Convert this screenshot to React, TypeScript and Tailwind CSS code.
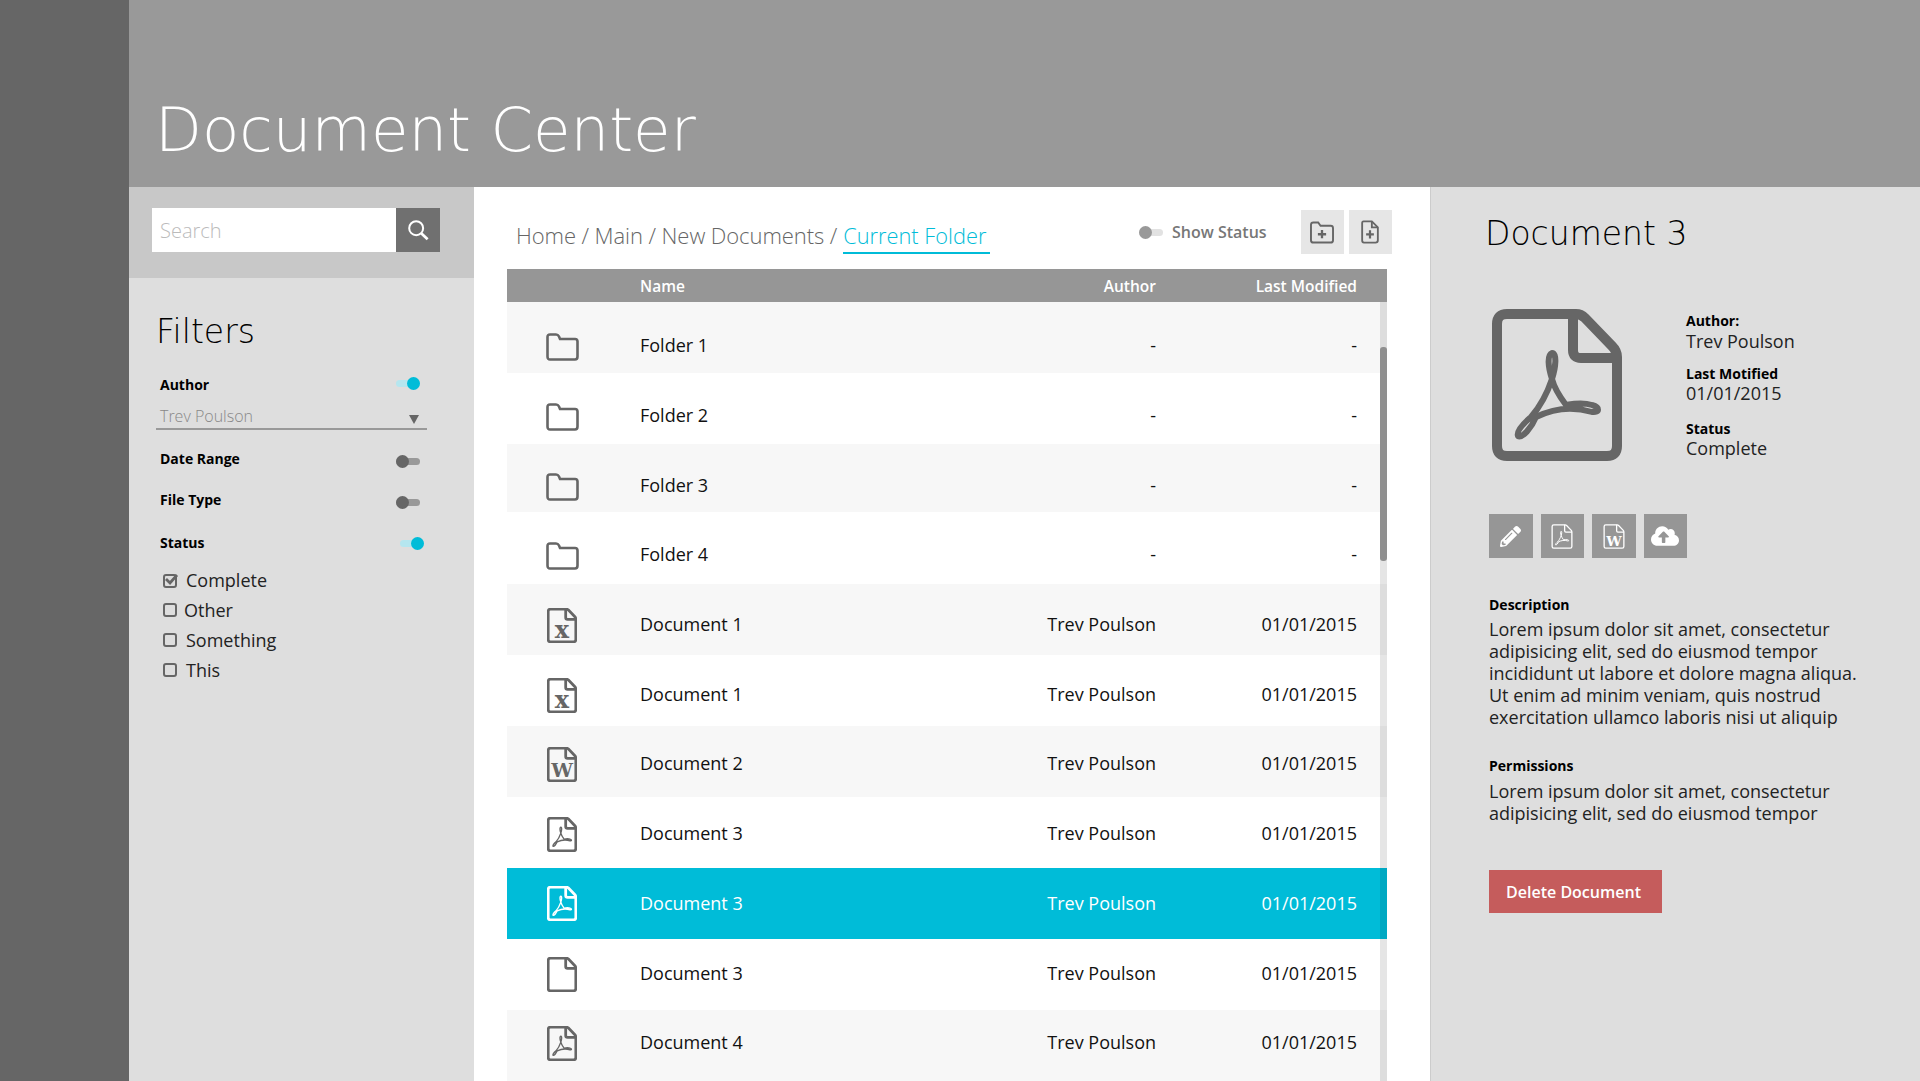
import { FaCloudUploadAlt, FaPencilAlt } from "react-icons/fa"
import type { ReactNode } from "react"

type FileKind = "folder" | "xls" | "doc" | "pdf" | "blank"

const rows: { kind: FileKind; name: string; author: string; date: string; shift: number }[] = [
  { kind: "folder", name: "Folder 1", author: "-", date: "-", shift: 7.5 },
  { kind: "folder", name: "Folder 2", author: "-", date: "-", shift: 6.5 },
  { kind: "folder", name: "Folder 3", author: "-", date: "-", shift: 7 },
  { kind: "folder", name: "Folder 4", author: "-", date: "-", shift: 6.5 },
  { kind: "xls", name: "Document 1", author: "Trev Poulson", date: "01/01/2015", shift: 4.5 },
  { kind: "xls", name: "Document 1", author: "Trev Poulson", date: "01/01/2015", shift: 3.5 },
  { kind: "doc", name: "Document 2", author: "Trev Poulson", date: "01/01/2015", shift: 1.5 },
  { kind: "pdf", name: "Document 3", author: "Trev Poulson", date: "01/01/2015", shift: 0.5 },
  { kind: "pdf", name: "Document 3", author: "Trev Poulson", date: "01/01/2015", shift: 0 },
  { kind: "blank", name: "Document 3", author: "Trev Poulson", date: "01/01/2015", shift: -1.5 },
  { kind: "pdf", name: "Document 4", author: "Trev Poulson", date: "01/01/2015", shift: -3.5 },
]

const lorem =
  "Lorem ipsum dolor sit amet, consectetur adipisicing elit, sed do eiusmod tempor"

function FileIcon({
  kind,
  className,
  weight = 10,
}: {
  kind: Exclude<FileKind, "folder">
  className: string
  weight?: number
}) {
  return (
    <svg viewBox="0 0 130 152" fill="none" stroke="currentColor" className={className}>
      <path
        strokeWidth={weight}
        d="M15 5H84Q89 5 93 9L120 37Q125 42 125 48V137Q125 147 115 147H15Q5 147 5 137V15Q5 5 15 5Z"
      />
      <path strokeWidth={weight} d="M81 5V41Q81 49 89 49H125" />
      {kind === "pdf" && (
        <path
          strokeWidth="6"
          strokeLinejoin="round"
          d="M60 70C56 58 55 46 60 44C65 44 64 58 60 70C54 88 46 100 39 108C32 114 24 122 26 127C30 130 40 118 44 108C60 100 80 97 100 103C108 104 108 98 100 96C90 93 80 95 74 96C68 88 62 78 60 70Z"
        />
      )}
      {kind === "xls" && (
        <text
          x="65"
          y="130"
          textAnchor="middle"
          fontFamily="'DejaVu Serif', serif"
          fontWeight="700"
          fontSize="104"
          fill="currentColor"
          stroke="none"
        >
          x
        </text>
      )}
      {kind === "doc" && (
        <text
          x="65"
          y="132"
          textAnchor="middle"
          fontFamily="'DejaVu Serif', serif"
          fontWeight="700"
          fontSize="84"
          fill="currentColor"
          stroke="none"
        >
          W
        </text>
      )}
    </svg>
  )
}

function FolderIcon() {
  return (
    <svg viewBox="0 0 33 28" fill="none" stroke="currentColor" strokeWidth="2.6" className="h-[28px] w-[33px]">
      <path d="M1.5 4Q1.5 1.5 4 1.5H10Q12 1.5 13 3.5L14 6H29Q31.5 6 31.5 8.5V23.5Q31.5 26.5 29 26.5H4Q1.5 26.5 1.5 23.5Z" />
    </svg>
  )
}

function Toggle({
  on,
  muted = false,
  className = "",
}: {
  on: boolean
  muted?: boolean
  className?: string
}) {
  return (
    <span className={`relative block h-[13px] w-6 shrink-0 ${className}`}>
      <span
        className={`absolute inset-x-0 top-[3px] h-[7px] rounded-full ${
          on ? "bg-[#b5e6ef]" : muted ? "bg-[#e2e2e2]" : "bg-[#999999]"
        }`}
      />
      <span
        className={`absolute top-0 size-[13px] rounded-full ${
          on ? "right-0 bg-[#00bcd8]" : muted ? "left-0 bg-[#999999]" : "left-0 bg-[#666666]"
        }`}
      />
    </span>
  )
}

function FilterHeading({
  label,
  on,
  className = "",
  toggleClassName = "",
}: {
  label: string
  on: boolean
  className?: string
  toggleClassName?: string
}) {
  return (
    <div className={`flex h-[21px] items-center justify-between ${className}`}>
      <span className="text-[14px] font-bold text-black">{label}</span>
      <Toggle on={on} className={toggleClassName} />
    </div>
  )
}

function CheckRow({
  label,
  checked = false,
  className = "h-[30px] gap-[9px]",
}: {
  label: string
  checked?: boolean
  className?: string
}) {
  return (
    <div className={`flex items-center pl-[3px] text-[18px] text-[#222222] ${className}`}>
      <span className="relative size-[14px] rounded-[3px] border-2 border-[#666666]">
        {checked && (
          <svg
            viewBox="0 0 16 16"
            className="absolute -top-[4px] -right-[4px] size-[16px]"
            fill="none"
            stroke="#666666"
            strokeWidth="2.8"
          >
            <path d="M3 7L7 11L14 3" />
          </svg>
        )}
      </span>
      {label}
    </div>
  )
}

function SquareButton({ children, className }: { children: ReactNode; className: string }) {
  return <button className={`flex items-center justify-center ${className}`}>{children}</button>
}

function Row({ row, index }: { row: (typeof rows)[number]; index: number }) {
  const selected = index === 8
  const striped = index % 2 === 0
  const height = index === 2 ? "h-[68px]" : index === 3 ? "h-[72px]" : "h-[71px]"
  return (
    <div
      style={{
        paddingTop: Math.max(0, row.shift * 2),
        paddingBottom: Math.max(0, -row.shift * 2),
      }}
      className={`flex items-center text-[18px] ${height} ${
        selected ? "bg-[#00bcd8] text-white" : striped ? "bg-[#f7f7f7] text-[#111111]" : "bg-white text-[#111111]"
      }`}
    >
      <div className={`flex w-[133px] justify-center pr-[23px] ${selected ? "text-white" : "mt-[3px] text-[#666666]"}`}>
        {row.kind === "folder" ? (
          <FolderIcon />
        ) : (
          <FileIcon kind={row.kind} weight={12} className="h-[35px] w-[30px]" />
        )}
      </div>
      <div className="flex-1">{row.name}</div>
      <div className="w-[200px] text-right">{row.author}</div>
      <div className="w-[201px] text-right">{row.date}</div>
      <div className="w-[30px]" />
    </div>
  )
}

export default function App() {
  return (
    <div className="flex h-screen overflow-hidden font-['Open_Sans',sans-serif]">
      <div className="w-[129px] shrink-0 bg-[#666666]" />
      <div className="flex min-w-0 flex-1 flex-col">
        <header className="h-[187px] shrink-0 bg-[#999999] pt-[86px] pl-[26px]">
          <h1 className="font-['DejaVu_Sans',sans-serif] text-[61px] leading-[88px] font-extralight text-white">
            Document Center
          </h1>
        </header>
        <div className="flex min-h-0 flex-1">
          <aside className="w-[345px] shrink-0 bg-[#dedede]">
            <div className="flex h-[91px] bg-[#c8c8c8] pt-[21px] pl-[23px]">
              <div className="flex h-[44px] w-[244px] items-center bg-white pt-[2px] pl-[8px] text-[20px] font-light text-[#bbbbbb]">
                Search
              </div>
              <button className="flex size-[44px] items-center justify-center bg-[#707070] text-white">
                <svg viewBox="0 0 24 24" fill="none" stroke="currentColor" className="size-[22px]">
                  <circle cx="10" cy="10" r="7.6" strokeWidth="2.2" />
                  <path strokeWidth="3" d="M15.5 15.5L22.5 22" />
                </svg>
              </button>
            </div>
            <div className="pt-[32px] pl-[31px]">
              <h2 className="-ml-[4px] font-['DejaVu_Sans',sans-serif] text-[33px] leading-[44px] font-extralight text-black">
                Filters
              </h2>
              <FilterHeading label="Author" on className="mt-[20px] w-[260px]" toggleClassName="mb-[2px]" />
              <div className="mt-[8px] -ml-[4px] flex h-[27px] w-[271px] items-center justify-between border-b-2 border-[#999999] pr-[8px] pl-[4px] text-[16px] font-light text-[#888888]">
                Trev Poulson
                <span className="mt-[8px] border-x-[5px] border-t-[9px] border-x-transparent border-t-[#666666]" />
              </div>
              <FilterHeading label="Date Range" on={false} className="mt-[18px] w-[260px]" toggleClassName="mt-[6px]" />
              <FilterHeading label="File Type" on={false} className="mt-[20px] w-[260px]" toggleClassName="mt-[6px]" />
              <FilterHeading label="Status" on className="mt-[22px] w-[264px]" toggleClassName="mt-[2px]" />
              <div className="mt-[13px]">
                <CheckRow label="Complete" checked className="h-[29px] gap-[9px]" />
                <CheckRow label="Other" className="h-[30px] gap-[7px]" />
                <CheckRow label="Something" />
                <CheckRow label="This" />
              </div>
            </div>
          </aside>

          <main className="w-[956px] shrink-0 bg-white">
            <div className="flex h-[82px] items-start pl-[42px]">
              <div className="mt-[32px] flex w-[504px] items-baseline text-[22px] leading-[32px] font-light text-[#666666]">
                <span className="tracking-[-0.08px]">Home / Main / New Documents /</span>
                <span className="ml-[6px] border-b-2 border-[#00bcd8] pr-[4px] text-[21.8px] text-[#00bcd8]">
                  Current Folder
                </span>
              </div>
              <div className="mt-[35px] ml-[119px] flex items-center gap-[9px] text-[16px] leading-[20px] font-semibold text-[#777777]">
                <Toggle on={false} muted />
                Show Status
              </div>
              <div className="mt-[23px] ml-[34px] flex gap-[5px]">
                <SquareButton className="h-[44px] w-[43px] bg-[#e6e6e6] text-[#666666]">
                  <svg viewBox="0 0 26 24" fill="none" stroke="currentColor" strokeWidth="2" className="h-[23px] w-[26px]">
                    <path d="M1.5 4Q1.5 1.5 4 1.5H9L11.5 5H22Q24.5 5 24.5 7.5V20Q24.5 22.5 22 22.5H4Q1.5 22.5 1.5 20Z" />
                    <path strokeWidth="2.4" d="M13 9.5V18M8.7 13.8H17.3" />
                  </svg>
                </SquareButton>
                <SquareButton className="h-[44px] w-[43px] bg-[#e6e6e6] text-[#666666]">
                  <svg viewBox="0 0 20 26" fill="none" stroke="currentColor" strokeWidth="2" className="h-[24px] w-[20px]">
                    <path d="M3 1.5H12L18.5 8V22Q18.5 24.5 16 24.5H3.5Q1.5 24.5 1.5 22V3.5Q1.5 1.5 3 1.5Z" />
                    <path d="M12 1.5V8H18.5" />
                    <path strokeWidth="2.4" d="M10 11V20M5.8 15.5H14.2" />
                  </svg>
                </SquareButton>
              </div>
            </div>
            <div className="relative ml-[33px] w-[880px]">
              <div className="flex h-[33px] items-center bg-[#969696] pt-[2px] text-[15.5px] font-semibold text-white">
                <div className="w-[133px]" />
                <div className="flex-1">Name</div>
                <div className="w-[200px] text-right">Author</div>
                <div className="w-[201px] text-right">Last Modified</div>
                <div className="w-[30px]" />
              </div>
              {rows.map((row, index) => (
                <Row key={index} row={row} index={index} />
              ))}
              <div className="absolute top-[33px] right-0 h-[780px] w-[7px] bg-black/10">
                <div className="mt-[45px] h-[214px] w-full rounded-[3px] bg-[#8f8f8f]" />
              </div>
            </div>
          </main>

          <aside className="flex-1 border-l border-[#cccccc] bg-[#dedede] pt-[24px] pl-[58px] text-[#222222]">
            <h2 className="-ml-[4px] font-['DejaVu_Sans',sans-serif] text-[33px] leading-[46px] font-extralight text-black">
              Document 3
            </h2>
            <div className="mt-[52px] flex">
              <FileIcon kind="pdf" className="ml-[3px] h-[152px] w-[130px] text-[#666666]" />
              <div className="ml-[64px] text-[18px] leading-[22px]">
                <div className="pt-[3px] text-[14px] leading-[18px] font-bold text-black">Author:</div>
                <div>Trev Poulson</div>
                <div className="mt-[14px] text-[14px] leading-[16px] font-bold text-black">Last Motified</div>
                <div>01/01/2015</div>
                <div className="mt-[16px] text-[14px] leading-[17px] font-bold text-black">Status</div>
                <div>Complete</div>
              </div>
            </div>
            <div className="mt-[53px] flex gap-[8px] text-white">
              <SquareButton className="h-[44px] w-[43.5px] bg-[#969696]">
                <FaPencilAlt className="size-[21px]" />
              </SquareButton>
              <SquareButton className="h-[44px] w-[43.5px] bg-[#969696]">
                <FileIcon kind="pdf" weight={8} className="h-[25px] w-[22px]" />
              </SquareButton>
              <SquareButton className="h-[44px] w-[43.5px] bg-[#969696]">
                <FileIcon kind="doc" weight={8} className="h-[25px] w-[22px]" />
              </SquareButton>
              <SquareButton className="h-[44px] w-[43.5px] bg-[#969696]">
                <FaCloudUploadAlt className="size-[28px]" />
              </SquareButton>
            </div>
            <div className="mt-[37px] w-[390px] text-[18px] leading-[22px]">
              <div className="text-[14px] leading-[20px] font-bold text-black">Description</div>
              <p className="mt-[3px]">
                {lorem} incididunt ut labore et dolore magna aliqua. Ut enim ad minim veniam, quis nostrud exercitation
                ullamco laboris nisi ut aliquip
              </p>
              <div className="mt-[28px] text-[14px] leading-[20px] font-bold text-black">Permissions</div>
              <p className="mt-[4px]">{lorem}</p>
            </div>
            <button className="mt-[46px] h-[43px] w-[173px] bg-[#c55c5c] pr-[4px] text-[16px] font-semibold text-white">
              Delete Document
            </button>
          </aside>
        </div>
      </div>
    </div>
  )
}
